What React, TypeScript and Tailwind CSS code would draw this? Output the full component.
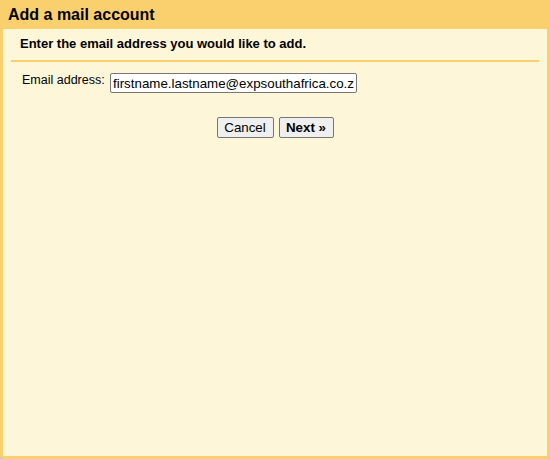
import React, { useState } from "react";

export default function App() {
  const [email, setEmail] = useState("firstname.lastname@expsouthafrica.co.za");

  return (
    <div className="w-[550px] h-[459px] bg-[#c4c4c4] font-['Liberation_Sans',Arial,sans-serif] text-black">
      <div className="flex flex-col w-full h-full bg-[#fad06e] rounded-b-[4px] px-[3px] pb-[3px]">
        {/* title bar */}
        <div className="h-[29px] pl-[5px] pt-[6px]">
          <h1 className="text-[16px] leading-[18px] font-bold">Add a mail account</h1>
        </div>

        {/* body */}
        <div className="flex-1 bg-[#fef6d9] flex flex-col">
          <p className="pl-[17px] pt-[7px] text-[13px] leading-[15px] font-bold">
            Enter the email address you would like to add.
          </p>
          <div className="mx-[8px] mt-[9px] h-[2px] bg-[#fad06e]"></div>

          <div className="flex items-start pl-[19px] mt-[11px]">
            <label htmlFor="email" className="w-[88px] text-[12.5px] leading-[15px]">
              Email address:
            </label>
            <input
              id="email"
              type="text"
              value={email}
              onChange={(e) => setEmail(e.target.value)}
              className="w-[247px] h-[20px] px-[2px] bg-white border border-[#767676] rounded-[2px] text-[13.33px] outline-none"
            />
          </div>

          <div className="flex justify-center gap-[5px] mt-[24px]">
            <button className="w-[57px] h-[21px] bg-[#efefef] border border-[#767676] rounded-[2px] text-[13.33px] leading-[17px]">
              Cancel
            </button>
            <button className="w-[55px] h-[21px] bg-[#efefef] border border-[#767676] rounded-[2px] text-[13.33px] leading-[17px] font-bold">
              Next »
            </button>
          </div>
        </div>
      </div>
    </div>
  );
}
